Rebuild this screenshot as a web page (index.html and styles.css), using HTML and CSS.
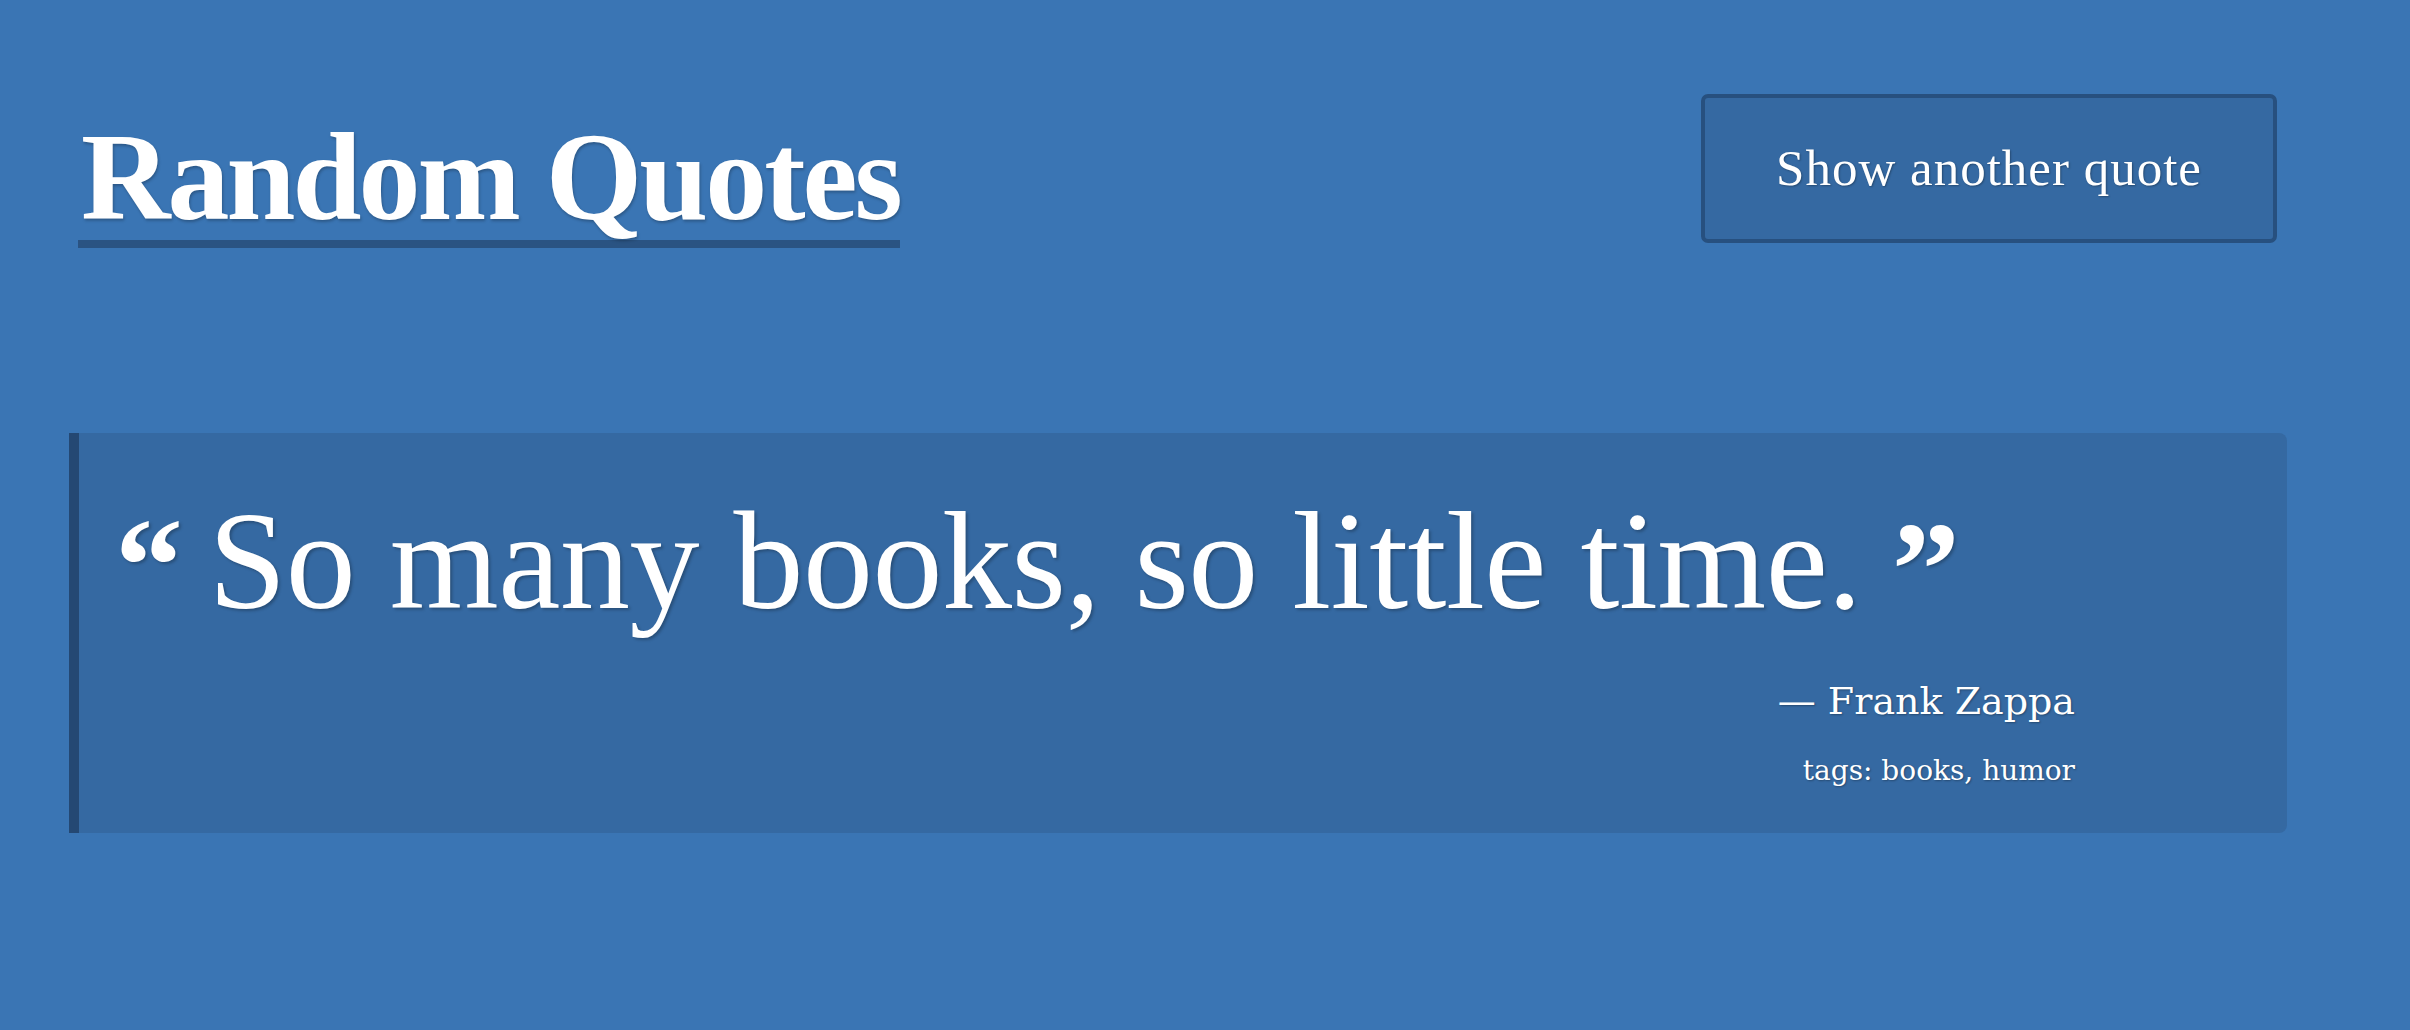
FILE: index.html
```html
<!DOCTYPE html>
<html lang="en">
<head>
<meta charset="utf-8">
<title>Random Quotes</title>
<link rel="stylesheet" href="styles.css">
</head>
<body>
<div class="page">
  <header class="header">
    <h1 class="title">Random Quotes</h1>
    <button class="next-btn" type="button">Show another quote</button>
  </header>
  <blockquote class="card">
    <p class="quote"><span class="mark mark-open">“</span><span class="quote-text">So many books, so little time.</span><span class="mark mark-close">”</span></p>
    <div class="meta">
      <p class="author">— Frank Zappa</p>
      <p class="tags">tags: books, humor</p>
    </div>
  </blockquote>
</div>
</body>
</html>
```

FILE: styles.css
```css
html, body {
  margin: 0;
  padding: 0;
}
body {
  background: #3a75b4;
  color: #ffffff;
  font-family: "Liberation Serif", "Times New Roman", serif;
  min-height: 1030px;
}
.page {
  padding: 0 123px 0 69px;
}
.header {
  display: flex;
  justify-content: space-between;
  align-items: flex-start;
  padding: 94px 10px 0 9px;
}
.title {
  margin: 22px 0 0 0;
  font-size: 124px;
  line-height: 124px;
  font-weight: 700;
  letter-spacing: -3px;
  padding: 0 0 0 3px;
  border-bottom: 8px solid #2a5382;
  text-shadow: 1px 2px 3px rgba(0, 0, 0, 0.25);
}
.next-btn {
  margin: 0;
  height: 149px;
  box-sizing: border-box;
  padding: 0 71px;
  background: #3569a2;
  border: 4px solid #27507f;
  border-radius: 7px;
  color: #ffffff;
  font-family: "Liberation Serif", "Times New Roman", serif;
  font-size: 51px;
  line-height: 141px;
  letter-spacing: 1px;
  text-shadow: 1px 1px 2px rgba(0, 0, 0, 0.3);
}
.card {
  margin: 185px 0 0 0;
  background: #3569a2;
  border-left: 10px solid #244873;
  border-radius: 0 8px 8px 0;
  padding: 48px 0 42px 36px;
}
.quote {
  margin: 0;
  font-size: 140px;
  line-height: 160px;
  letter-spacing: -0.5px;
  display: flex;
  align-items: flex-start;
  text-shadow: 2px 2px 3px rgba(0, 0, 0, 0.25);
}
.mark {
  font-weight: 700;
  font-size: 136px;
  line-height: 160px;
}
.mark-open {
  margin-right: 26px;
  margin-top: 4px;
}
.mark-close {
  margin-left: 30px;
  margin-top: 8px;
}
.meta {
  padding-right: 212px;
  text-align: right;
  font-family: "DejaVu Serif", serif;
  text-shadow: 1px 1px 2px rgba(0, 0, 0, 0.3);
}
.author {
  margin: 27px 0 0 0;
  font-size: 38px;
  line-height: 50px;
  letter-spacing: 0;
}
.tags {
  margin: 25px 0 0 0;
  font-size: 28px;
  line-height: 40px;
}
```
